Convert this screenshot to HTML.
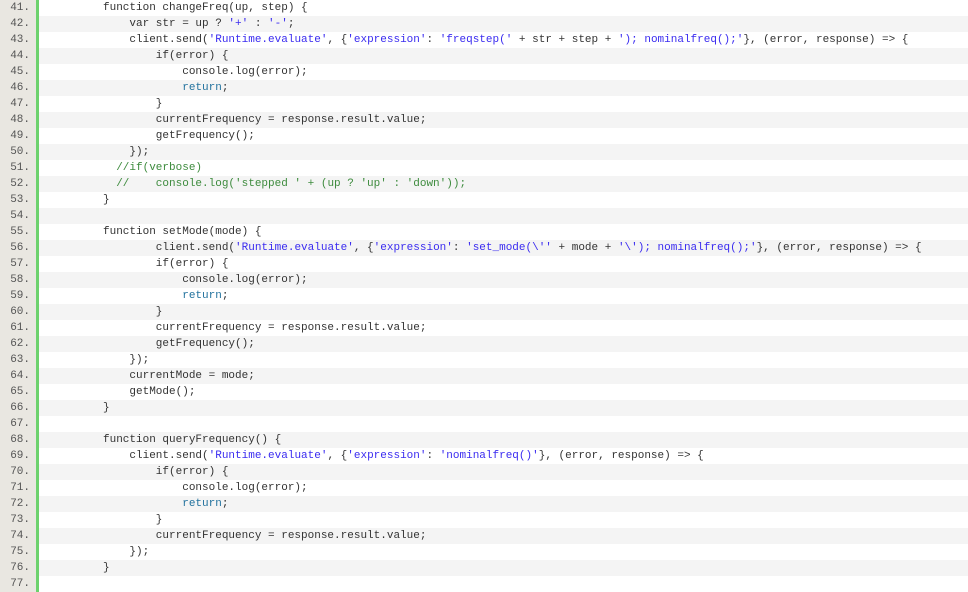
<!DOCTYPE html>
<html><head><meta charset="utf-8"><style>
body{margin:0;width:968px;height:587px;overflow:hidden;background:#fff;font-family:"Liberation Mono",monospace;font-size:11px;color:#333}
.r{height:16px;line-height:16px;display:flex;white-space:pre}
.r:nth-child(even){background:#f4f4f4}
.n{background:#e9e7e1;color:#555;text-align:right;padding-right:6px;box-sizing:border-box;border-right:3px solid #6dd26d;flex:none;width:39px}
.c{padding-left:64px}
.s{color:#3a2bf0}.k{color:#22729e}.m{color:#3d8b3d}
</style></head><body>
<div class="r"><div class="n">41.</div><div class="c">function changeFreq(up, step) {</div></div>
<div class="r"><div class="n">42.</div><div class="c">    var str = up ? <span class="s">'+'</span> : <span class="s">'-'</span>;</div></div>
<div class="r"><div class="n">43.</div><div class="c">    client.send(<span class="s">'Runtime.evaluate'</span>, {<span class="s">'expression'</span>: <span class="s">'freqstep('</span> + str + step + <span class="s">'); nominalfreq();'</span>}, (error, response) =&gt; {</div></div>
<div class="r"><div class="n">44.</div><div class="c">        if(error) {</div></div>
<div class="r"><div class="n">45.</div><div class="c">            console.log(error);</div></div>
<div class="r"><div class="n">46.</div><div class="c">            <span class="k">return</span>;</div></div>
<div class="r"><div class="n">47.</div><div class="c">        }</div></div>
<div class="r"><div class="n">48.</div><div class="c">        currentFrequency = response.result.value;</div></div>
<div class="r"><div class="n">49.</div><div class="c">        getFrequency();</div></div>
<div class="r"><div class="n">50.</div><div class="c">    });</div></div>
<div class="r"><div class="n">51.</div><div class="c">  <span class="m">//if(verbose)</span></div></div>
<div class="r"><div class="n">52.</div><div class="c">  <span class="m">//    console.log('stepped ' + (up ? 'up' : 'down'));</span></div></div>
<div class="r"><div class="n">53.</div><div class="c">}</div></div>
<div class="r"><div class="n">54.</div><div class="c"></div></div>
<div class="r"><div class="n">55.</div><div class="c">function setMode(mode) {</div></div>
<div class="r"><div class="n">56.</div><div class="c">        client.send(<span class="s">'Runtime.evaluate'</span>, {<span class="s">'expression'</span>: <span class="s">'set_mode(\'' </span>+ mode + <span class="s">'\'); nominalfreq();'</span>}, (error, response) =&gt; {</div></div>
<div class="r"><div class="n">57.</div><div class="c">        if(error) {</div></div>
<div class="r"><div class="n">58.</div><div class="c">            console.log(error);</div></div>
<div class="r"><div class="n">59.</div><div class="c">            <span class="k">return</span>;</div></div>
<div class="r"><div class="n">60.</div><div class="c">        }</div></div>
<div class="r"><div class="n">61.</div><div class="c">        currentFrequency = response.result.value;</div></div>
<div class="r"><div class="n">62.</div><div class="c">        getFrequency();</div></div>
<div class="r"><div class="n">63.</div><div class="c">    });</div></div>
<div class="r"><div class="n">64.</div><div class="c">    currentMode = mode;</div></div>
<div class="r"><div class="n">65.</div><div class="c">    getMode();</div></div>
<div class="r"><div class="n">66.</div><div class="c">}</div></div>
<div class="r"><div class="n">67.</div><div class="c"></div></div>
<div class="r"><div class="n">68.</div><div class="c">function queryFrequency() {</div></div>
<div class="r"><div class="n">69.</div><div class="c">    client.send(<span class="s">'Runtime.evaluate'</span>, {<span class="s">'expression'</span>: <span class="s">'nominalfreq()'</span>}, (error, response) =&gt; {</div></div>
<div class="r"><div class="n">70.</div><div class="c">        if(error) {</div></div>
<div class="r"><div class="n">71.</div><div class="c">            console.log(error);</div></div>
<div class="r"><div class="n">72.</div><div class="c">            <span class="k">return</span>;</div></div>
<div class="r"><div class="n">73.</div><div class="c">        }</div></div>
<div class="r"><div class="n">74.</div><div class="c">        currentFrequency = response.result.value;</div></div>
<div class="r"><div class="n">75.</div><div class="c">    });</div></div>
<div class="r"><div class="n">76.</div><div class="c">}</div></div>
<div class="r"><div class="n">77.</div><div class="c"></div></div>
</body></html>
